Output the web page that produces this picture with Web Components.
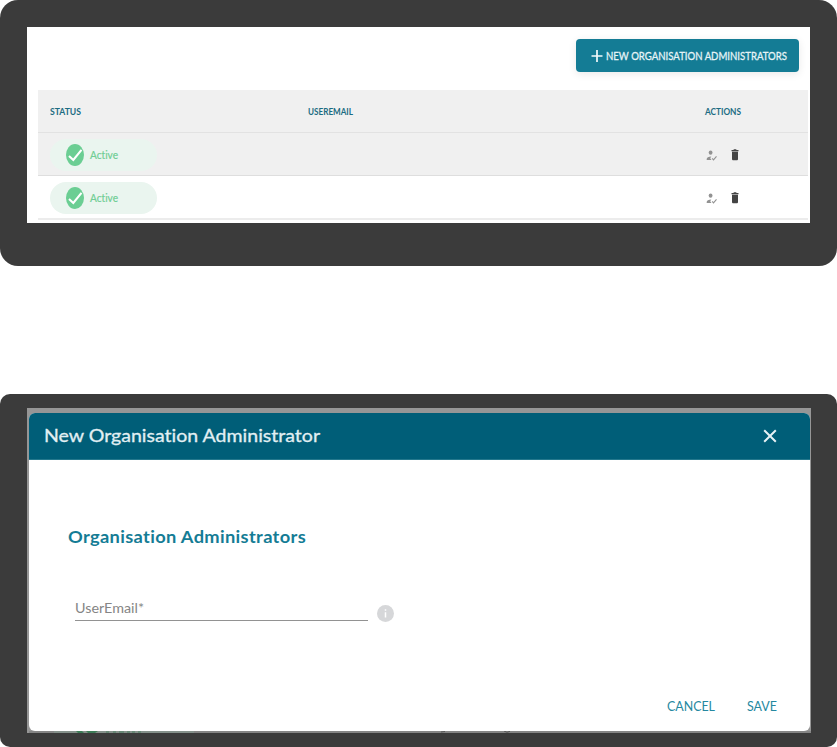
<!DOCTYPE html>
<html lang="en">
<head>
<meta charset="utf-8">
<title>Organisation Administrators</title>
<style>
body { margin: 0; background: #fff; font-family: Lato, "Open Sans", sans-serif; font-variant-ligatures: none; }
</style>
</head>
<body>
<admin-page></admin-page>
<script>
class BaseElement extends HTMLElement {
  constructor() {
    super();
    this.attachShadow({ mode: "open" }).innerHTML = this.constructor.markup;
  }
}
const define = (name, markup, setup) => {
  customElements.define(name, class extends BaseElement {
    static markup = markup;
    connectedCallback() { if (setup) setup.call(this); }
  });
};

// A single line of text scaled horizontally to the width given in pixels.
define("fit-text", `
<style>
:host { display: block; flex: none; white-space: nowrap; line-height: 1.2; }
span { display: inline-block; transform-origin: 0 50%; }
</style><span><slot></slot></span>`, function () {
  const width = parseFloat(this.getAttribute("width"));
  const span = this.shadowRoot.querySelector("span");
  this.style.width = width + "px";
  span.style.transform = "scaleX(" + width / span.getBoundingClientRect().width + ")";
});

define("status-pill", `
<style>
:host { display: flex; align-items: center; box-sizing: border-box; width: 107px; height: 32px;
  padding-left: 16px; gap: 6px; border-radius: 16px; background: #eaf5ef; color: #6fce94; font-size: 11.5px; -webkit-text-stroke: .2px #6fce94; }
svg { width: 18px; height: 22px; flex: none; }
</style>
<svg viewBox="0 0 18 22"><ellipse cx="9" cy="11" rx="9" ry="11" fill="#6bce93"/><path d="M3 12 7.3 16 15.5 5.8" fill="none" stroke="#fff" stroke-width="2.1"/></svg>
<fit-text width="28"><slot></slot></fit-text>`);

define("row-actions", `
<style>
:host { display: flex; align-items: center; gap: 14px; }
svg { display: block; }
</style>
<svg width="11" height="11" viewBox="0 0 11 11"><ellipse cx="4.6" cy="2.6" rx="1.9" ry="2.2" fill="#929292"/><path d="M.7 10V9C.7 7.5 2.6 6.7 5.3 6.6L4.2 8.2 5.5 10Z" fill="#929292"/><path d="m6.2 8.4 1.3 1.5 3-3.5" fill="none" stroke="#929292" stroke-width="1.1"/></svg>
<svg width="8" height="12" viewBox="0 0 8 12"><path d="M.5 1H2.4L2.9.3H5.1L5.6 1H7.5V2.2H.5ZM1 2.8H7V10.1Q7 11.3 6 11.3H2Q1 11.3 1 10.1Z" fill="#444"/></svg>`);

define("new-button", `
<style>
:host { display: flex; align-items: center; box-sizing: border-box; width: 223px; height: 33px; padding: 1px 0 0 15px; gap: 3px;
  border-radius: 4px; background: #147c95; color: #e6f4f7; font-size: 12px; -webkit-text-stroke: .3px #e6f4f7; box-shadow: 0 2px 9px rgba(0,0,0,.09); }
svg { flex: none; }
</style>
<svg width="12" height="14" viewBox="0 0 12 14"><path d="M6 1V13M.5 7H11.5" stroke="#f2fafb" stroke-width="1.7"/></svg>
<fit-text width="181"><slot></slot></fit-text>`);

define("admin-table", `
<style>
:host { display: block; }
.row { display: grid; grid-template-columns: 258px 397px 1fr; align-items: center; box-sizing: border-box;
  height: 43px; padding-left: 12px; border-bottom: 1px solid #e2e2e2; }
.head { color: #1c6c82; font-size: 10px; font-weight: 700; padding-bottom: 1px; }
.head, .shade { background: #f0f0f0; }
.shade { border-color: #dedede; padding-top: 2px; }
.last { height: 44px; border-bottom: 2px solid #ececec; padding-top: 2px; }
row-actions { padding-left: 1px; }
</style>
<div class="row head"><fit-text width="31">STATUS</fit-text><fit-text width="45">USEREMAIL</fit-text><fit-text width="36">ACTIONS</fit-text></div>
<div class="row shade"><status-pill>Active</status-pill><i></i><row-actions></row-actions></div>
<div class="row last"><status-pill>Active</status-pill><i></i><row-actions></row-actions></div>`);

define("dark-frame", `
<style>
:host { display: block; box-sizing: border-box; background: #3b3b3b; overflow: hidden; }
</style><slot></slot>`);

define("email-field", `
<style>
:host { display: flex; align-items: flex-end; gap: 9px; }
.line { box-sizing: border-box; width: 293px; height: 21px; border-bottom: 1px solid #929292; color: #858585; font-size: 13.5px; }
svg { display: block; position: relative; top: 1px; }
</style>
<div class="line"><fit-text width="69"><slot></slot></fit-text></div>
<svg width="17" height="17" viewBox="0 0 17 17"><circle cx="8.5" cy="8.5" r="8.5" fill="#d6d7d9"/><path d="M8.5 4.2V5.8M8.5 7.3V12.5" stroke="#fff" stroke-width="1.5"/></svg>`);

define("admin-dialog", `
<style>
:host { display: flex; flex-direction: column; box-sizing: border-box; width: 781px; height: 318px; background: #fff; border-radius: 6px; overflow: hidden; }
header { display: flex; align-items: center; justify-content: space-between; box-sizing: border-box; height: 47px; padding: 0 33px 0 15px;
  background: #005e78; border-bottom: 1px solid #24788d; color: #e2eff3; font-size: 18.2px; }
header fit-text { -webkit-text-stroke: .3px #e2eff3; padding-bottom: 1px; }
main { flex: 1; padding: 67px 0 0 38.5px; color: #147c95; }
h2 { margin: 0; font-size: 16.3px; font-weight: 700; line-height: 20px; letter-spacing: .3px; }
email-field { padding: 53px 0 0 7.5px; }
footer { display: flex; gap: 32px; padding: 0 33px 16px 0; justify-content: flex-end; color: #2588a0; font-size: 13px; }
</style>
<header><fit-text width="276">New Organisation Administrator</fit-text>
<svg width="14" height="14" viewBox="0 0 14 14"><path d="m1.2 1.2 11.6 11.6M12.8 1.2 1.2 12.8" stroke="#e7f2f5" stroke-width="2"/></svg></header>
<main><h2><fit-text width="238">Organisation Administrators</fit-text></h2><email-field>UserEmail*</email-field></main>
<footer><fit-text width="48">CANCEL</fit-text><fit-text width="30">SAVE</fit-text></footer>`);

define("admin-page", `
<style>
:host { display: flex; flex-direction: column; gap: 128px; width: 837px; height: 747px; }
.list { height: 266px; padding: 27px; border-radius: 18px; }
.sheet { box-sizing: border-box; width: 783px; height: 196px; background: #fff; padding: 12px 2px 0 11px; }
.bar { display: flex; justify-content: flex-end; height: 51px; padding-right: 9px; }
.modal { height: 353px; padding: 14px 26px 0 27px; border-radius: 10px; }
.backdrop { display: flex; flex-direction: column; box-sizing: border-box; width: 784px; height: 325px; padding: 5px 0 0 2px; background: #969696; }
.peek { display: block; width: 782px; height: 2px; }
</style>
<dark-frame class="list"><div class="sheet"><div class="bar"><new-button>NEW ORGANISATION ADMINISTRATORS</new-button></div><admin-table></admin-table></div></dark-frame>
<dark-frame class="modal"><div class="backdrop"><admin-dialog></admin-dialog>
<svg class="peek" viewBox="0 0 782 2"><path d="M0 0H782V2H0Z" fill="#858585"/><path d="M25 0H165V2H25Z" fill="#85918b"/><path d="M47 0H53L55 2H49ZM57 0H69L66 2H59Z" fill="#3d7c57"/><path d="M77 1H80M84 1H87M90 1H95M98 1H101M103 1H106M109 1H112" stroke="#4a7e60"/><path d="m412 1 4-.5M475 0l3 1.3 3-1" stroke="#555" fill="none"/></svg></div></dark-frame>`);
</script>
</body>
</html>
